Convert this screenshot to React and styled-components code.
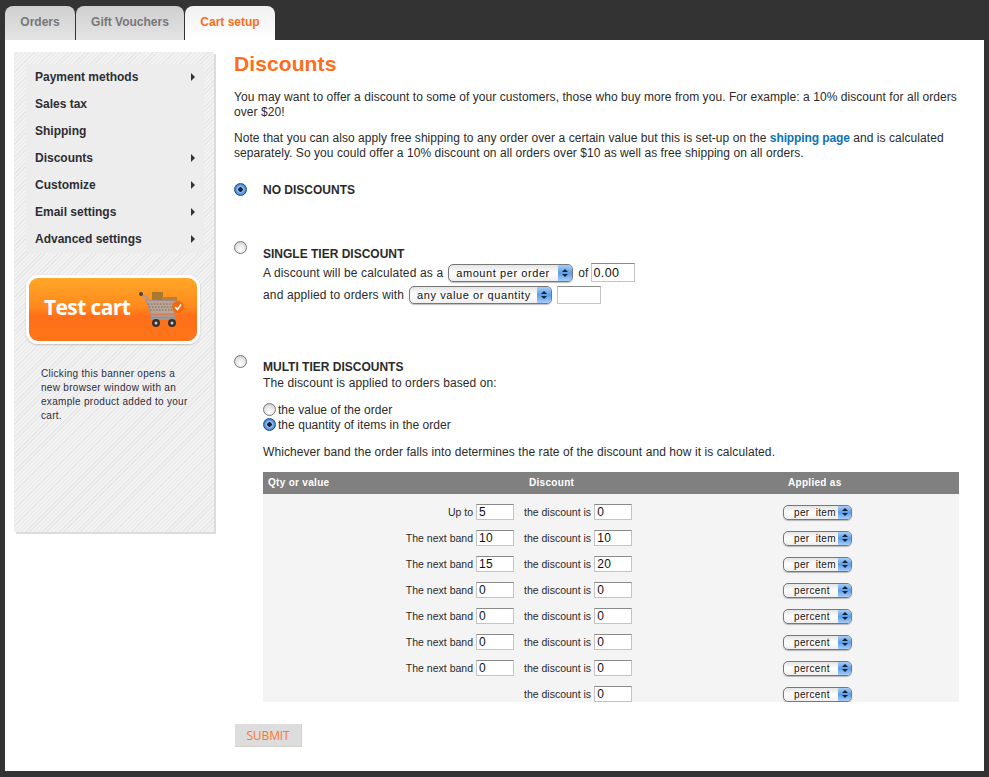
import React from "react";
import styled, { createGlobalStyle } from "styled-components";

const Global = createGlobalStyle`
  html, body { margin: 0; padding: 0; background: #333; }
  body { font-family: "Liberation Sans", Arial, sans-serif; font-size: 12px; color: #2b2b2b; }
`;
const Page = styled.div`
  width: 989px; height: 777px; background: #333; overflow: hidden; padding: 6px 5px 0; box-sizing: border-box;
`;
const Tabs = styled.div`display: flex; gap: 1px; height: 34px;`;
const Tab = styled.div`
  width: ${p => p.$w}px; height: 34px; box-sizing: border-box; border-radius: 8px 8px 0 0;
  display: flex; align-items: center; justify-content: center; font-weight: bold; font-size: 12px; padding-bottom: 3px;
  color: ${p => p.$active ? "#ff6c1a" : "#777"};
  background: ${p => p.$active ? "linear-gradient(#f0f0f0,#fff)" : "linear-gradient(#cfcfcf,#e4e4e4)"};
`;
const Panel = styled.div`
  width: 979px; height: 731px; background: #fff; display: flex; box-sizing: border-box; padding: 12px 0 0 9px;
`;
const Sidebar = styled.aside`
  width: 200px; height: 480px; box-sizing: border-box; padding: 12px 10px 0 12px; flex: none;
  background: repeating-linear-gradient(135deg, #f2f2f2 0 2px, #e8e8e8 2px 3px);
  box-shadow: 2px 2px 0 #dcdcdc;
`;
const Menu = styled.nav`background: #ededed; height: 189px;`;
const MenuItem = styled.div`
  height: 27px; box-sizing: border-box; display: flex; align-items: center; justify-content: space-between;
  padding: 0 9px 2px 9px; font-weight: bold; font-size: 12px; color: #2d2d33;
`;
const Arrow = styled.span`
  width: 0; height: 0; border-left: 4px solid #333; border-top: 4px solid transparent; border-bottom: 4px solid transparent;
`;
const Banner = styled.div`
  width: 174px; height: 69px; margin: 22px 0 0 0; box-sizing: border-box; border: 3px solid #fff; border-radius: 12px;
  box-shadow: 0 1px 2px rgba(0,0,0,.2);
  background: linear-gradient(#ffa726 0%, #ff8a1f 45%, #ff7018 60%, #ff7419 100%);
  display: flex; align-items: center; justify-content: space-between; padding: 0 11px 0 15px;
  color: #fff; font-family: "Open Sans", sans-serif; font-weight: 700; font-size: 21px; letter-spacing: -.6px;
`;
const BannerLabel = styled.span`margin-top: -5px;`;
const BannerNote = styled.p`
  margin: 23px 0 0 15px; font-size: 10px; line-height: 14px; color: #2d2d40; width: 150px; letter-spacing: .3px;
`;
const Main = styled.main`
  margin-left: 20px; width: 725px; display: flex; flex-direction: column;
`;
const Title = styled.h1`
  margin: 0; font-size: 21px; line-height: 24px; color: #ff6c1a; font-weight: bold; letter-spacing: .1px;
`;
const Para = styled.p`
  margin: ${p => p.$top}px 0 0; line-height: 15px; font-size: 12px; color: #2b2b2b; width: 725px; letter-spacing: .06px;
`;
const Link = styled.a`color: #0a72b8; font-weight: bold; letter-spacing: -.1px;`;
const Option = styled.section`
  display: flex; margin-top: ${p => p.$top}px; align-items: flex-start;
`;
const Radio = styled.input.attrs({ type: "radio", readOnly: true })`
  appearance: none; margin: 0; width: 13px; height: 13px; border-radius: 50%; box-sizing: border-box; flex: none;
  border: 1px solid #777;
  background: radial-gradient(circle at 50% 70%, #fff, #ddd 70%, #aaa);
  &:checked {
    border-color: #1d4f8c;
    background: radial-gradient(circle, #10233f 0 2px, #9cc4ee 2.5px, #4d8ad6 5px, #2d67b4 7px);
  }
`;
const OptionBody = styled.div`margin-left: 16px; flex: 1; min-width: 0;`;
const OptionTitle = styled.h2`
  margin: ${p => p.$top || 0}px 0 0; font-size: 12px; line-height: 15px; font-weight: bold; color: #2b2b2b;
`;
const Line = styled.div`
  display: flex; align-items: center; height: ${p => p.$h || 15}px; gap: 5px; margin-top: ${p => p.$top || 0}px; letter-spacing: ${p => p.$ls ?? .08}px;
`;
const Of = styled.span`margin-right: -3px;`;
const SelectBox = styled.div`
  display: flex; box-sizing: border-box; width: ${p => p.$w}px; height: ${p => p.$small ? 15 : 18}px;
  border: 1px solid #777; border-radius: 5px; overflow: hidden; flex: none;
  box-shadow: 0 1px 1px rgba(0,0,0,.25);
  font-size: ${p => p.$small ? 10 : 11}px; color: #111; letter-spacing: ${p => p.$small ? .35 : .58}px; word-spacing: ${p => p.$small ? 3 : 0}px;
  background: linear-gradient(#e4e4e4, #fff 50%, #eee);
`;
const SelectLabel = styled.span`flex: 1; display: flex; align-items: center; white-space: pre; padding-left: ${p => p.$small ? 10 : 7}px;`;
const SelectArrows = styled.span`
  width: ${p => p.$small ? 13 : 14}px; display: flex; flex-direction: column; align-items: center; justify-content: center; gap: 2px;
  background: linear-gradient(#a8cdf5, #5d9de8 50%, #a4cdf8);
  &::before { content: ""; border: 3px solid transparent; border-top: 0; border-bottom: 3px solid #123; }
  &::after { content: ""; border: 3px solid transparent; border-bottom: 0; border-top: 3px solid #123; }
`;
const Select = ({ w, small, children }) => (
  <SelectBox $w={w} $small={small}>
    <SelectLabel $small={small}>{children}</SelectLabel>
    <SelectArrows $small={small} />
  </SelectBox>
);
const Input = styled.input.attrs({ type: "text", readOnly: true })`
  box-sizing: border-box; width: ${p => p.$w}px; height: ${p => p.$h}px; padding: 0 2px; margin: 0; flex: none;
  border: 1px solid #c4c4c4; border-top-color: #8a8a8a; background: #fff; color: #111;
  font-family: "Liberation Sans", sans-serif; font-size: ${p => p.$fs}px; letter-spacing: .4px; outline: none; border-radius: 0;
`;
const SubOption = styled.label`display: flex; align-items: center; height: 15px; gap: 2px; margin-top: ${p => p.$top || 0}px; letter-spacing: .04px;`;
const Table = styled.div`width: 696px; margin-top: 13px; font-size: 10.5px;`;
const THead = styled.div`
  display: grid; grid-template-columns: 266px 259px 1fr; height: 22px; padding-bottom: 1px; box-sizing: border-box; align-items: center; background: #808080; color: #fff; font-weight: bold; font-size: 10px; letter-spacing: .3px;
`;
const Th = styled.div`padding-left: ${p => p.$pad || 0}px;`;
const TBody = styled.div`background: #f4f4f4; height: 208px; padding-top: 10px; box-sizing: border-box; overflow: hidden;`;
const Row = styled.div`
  display: grid; grid-template-columns: 251px 269px 1fr; height: 26px; align-items: start;
`;
const Cell = styled.div`display: flex; align-items: center; height: 16px; gap: 3px; justify-content: ${p => p.$end ? "flex-end" : "flex-start"}; padding-left: ${p => p.$pad || 0}px;`;
const Submit = styled.button`
  margin-top: 22px; width: 67px; height: 23px; align-self: flex-start; margin-left: 1px; background: #ddd; color: #ff7428;
  border: 0; border-bottom: 1px solid #d2d2c8; border-right: 1px solid #d2d2c8; padding: 0;
  font-family: "Open Sans", sans-serif; font-size: 12px; letter-spacing: -.1px;
`;
const rows = [
  ["Up to", "5", "0", "per item"],
  ["The next band", "10", "10", "per item"],
  ["The next band", "15", "20", "per item"],
  ["The next band", "0", "0", "percent"],
  ["The next band", "0", "0", "percent"],
  ["The next band", "0", "0", "percent"],
  ["The next band", "0", "0", "percent"],
  [null, null, "0", "percent"],
];
const Cart = () => (
  <svg width="48" height="42" viewBox="0 0 48 42" aria-hidden="true">
    <rect x="14" y="3" width="11" height="9" fill="#a9792f" />
    <rect x="24" y="8" width="15" height="9" fill="#b48334" />
    <path d="M3 6 L9 8 L14 27 L37 27" fill="none" stroke="#a99" strokeWidth="2" />
    <path d="M8 11 L40 12 L36 25 L13 25 Z" fill="#b9a595" stroke="#a89" strokeWidth="1" />
    <path d="M10 15H38M11 18H37M12 21H36" stroke="#7b6a5e" strokeWidth="1" strokeDasharray="1.5 1.5" />
    <path d="M12 30 H37" stroke="#999" strokeWidth="2" />
    <circle cx="3" cy="5" r="2" fill="#445" />
    <circle cx="18" cy="34" r="4" fill="#333" /><circle cx="18" cy="34" r="1.5" fill="#ccc" />
    <circle cx="34" cy="34" r="4" fill="#333" /><circle cx="34" cy="34" r="1.5" fill="#ccc" />
    <circle cx="40" cy="18" r="6" fill="#f26a10" />
    <path d="M37 18 L39.5 20.5 L43 15.5" fill="none" stroke="#fff" strokeWidth="1.5" />
  </svg>
);
export default function App() {
  return (
    <Page>
      <Global />
      <Tabs>
        <Tab $w={70}>Orders</Tab>
        <Tab $w={108}>Gift Vouchers</Tab>
        <Tab $w={90} $active>Cart setup</Tab>
      </Tabs>
      <Panel>
        <Sidebar>
          <Menu>
            <MenuItem>Payment methods<Arrow /></MenuItem>
            <MenuItem>Sales tax</MenuItem>
            <MenuItem>Shipping</MenuItem>
            <MenuItem>Discounts<Arrow /></MenuItem>
            <MenuItem>Customize<Arrow /></MenuItem>
            <MenuItem>Email settings<Arrow /></MenuItem>
            <MenuItem>Advanced settings<Arrow /></MenuItem>
          </Menu>
          <Banner><BannerLabel>Test cart</BannerLabel><Cart /></Banner>
          <BannerNote>Clicking this banner opens a new browser window with an example product added to your cart.</BannerNote>
        </Sidebar>
        <Main>
          <Title>Discounts</Title>
          <Para $top={14}>You may want to offer a discount to some of your customers, those who buy more from you. For example: a 10% discount for all orders over $20!</Para>
          <Para $top={11}>Note that you can also apply free shipping to any order over a certain value but this is set-up on the <Link>shipping page</Link> and is calculated separately. So you could offer a 10% discount on all orders over $10 as well as free shipping on all orders.</Para>
          <Option $top={22}>
            <Radio name="d" defaultChecked />
            <OptionBody><OptionTitle>NO DISCOUNTS</OptionTitle></OptionBody>
          </Option>
          <Option $top={43}>
            <Radio name="d" />
            <OptionBody>
              <OptionTitle $top={6}>SINGLE TIER DISCOUNT</OptionTitle>
              <Line $h={19} $top={1} $ls={.14}>A discount will be calculated as a <Select w={125}>amount per order</Select><Of>of</Of><Input $w={44} $h={19} $fs={12.5} defaultValue="0.00" /></Line>
              <Line $h={18} $top={4} $ls={.14}>and applied to orders with <Select w={143}>any value or quantity</Select><Input $w={44} $h={18} $fs={12} /></Line>
            </OptionBody>
          </Option>
          <Option $top={51}>
            <Radio name="d" />
            <OptionBody>
              <OptionTitle $top={5}>MULTI TIER DISCOUNTS</OptionTitle>
              <Line $ls={.1}>The discount is applied to orders based on:</Line>
              <SubOption $top={12}><Radio name="m" />the value of the order</SubOption>
              <SubOption><Radio name="m" defaultChecked />the quantity of items in the order</SubOption>
              <Line $top={12}>Whichever band the order falls into determines the rate of the discount and how it is calculated.</Line>
              <Table>
                <THead><Th $pad={5}>Qty or value</Th><Th>Discount</Th><Th>Applied as</Th></THead>
                <TBody>
                  {rows.map((r, i) => (
                    <Row key={i}>
                      <Cell $end>{r[0]}{r[1] !== null && <Input $w={38} $h={16} $fs={12} defaultValue={r[1]} />}</Cell>
                      <Cell $pad={10}>the discount is<Input $w={38} $h={16} $fs={12} defaultValue={r[2]} /></Cell>
                      <Cell><Select w={69} small>{r[3]}</Select></Cell>
                    </Row>
                  ))}
                </TBody>
              </Table>
            </OptionBody>
          </Option>
          <Submit>SUBMIT</Submit>
        </Main>
      </Panel>
    </Page>
  );
}
